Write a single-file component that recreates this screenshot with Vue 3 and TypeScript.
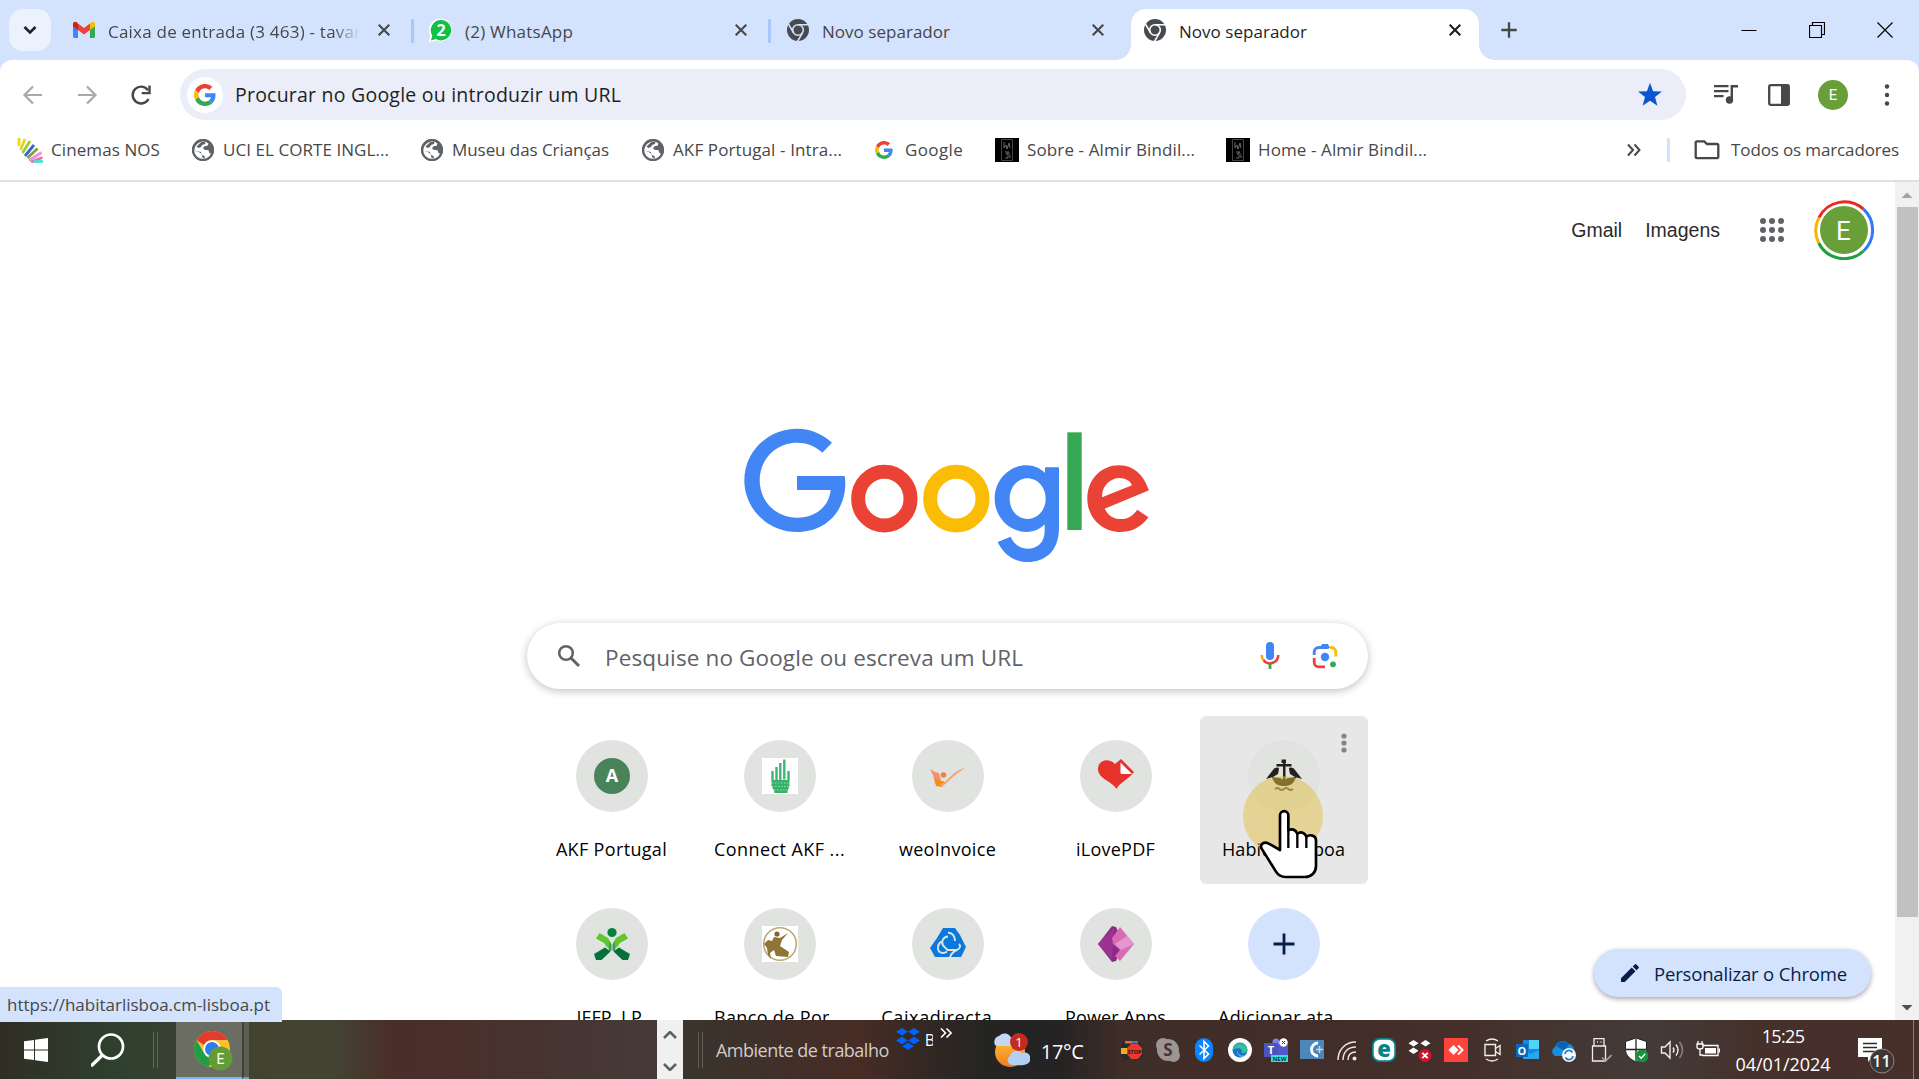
<script setup lang="ts">
interface Tab {
  icon: 'gmail' | 'whatsapp' | 'chrome'
  title: string
  width: number
  active?: boolean
}
interface Bookmark {
  icon: 'nos' | 'globe' | 'google' | 'dark'
  title: string
  width: number
}
interface Tile {
  icon: string
  title: string
  width: number
  hover?: boolean
}

const tabs: Tab[] = [
  { icon: 'gmail', title: 'Caixa de entrada (3 463) - tavare', width: 263 },
  { icon: 'whatsapp', title: '(2) WhatsApp', width: 108 },
  { icon: 'chrome', title: 'Novo separador', width: 128 },
  { icon: 'chrome', title: 'Novo separador', width: 128, active: true },
]

const bookmarks: Bookmark[] = [
  { icon: 'nos', title: 'Cinemas NOS', width: 109 },
  { icon: 'globe', title: 'UCI EL CORTE INGL...', width: 166 },
  { icon: 'globe', title: 'Museu das Crianças', width: 157 },
  { icon: 'globe', title: 'AKF Portugal - Intra...', width: 169 },
  { icon: 'google', title: 'Google', width: 58 },
  { icon: 'dark', title: 'Sobre - Almir Bindil...', width: 168 },
  { icon: 'dark', title: 'Home - Almir Bindil...', width: 169 },
]

const tiles: Tile[] = [
  { icon: 'akf', title: 'AKF Portugal', width: 111 },
  { icon: 'hand', title: 'Connect AKF ...', width: 131 },
  { icon: 'weo', title: 'weoInvoice', width: 97 },
  { icon: 'pdf', title: 'iLovePDF', width: 79 },
  { icon: 'ship', title: 'Habitar Lisboa', width: 123, hover: true },
  { icon: 'iefp', title: 'IEFP, I.P.', width: 70 },
  { icon: 'bank', title: 'Banco de Por...', width: 131 },
  { icon: 'caixa', title: 'Caixadirecta ...', width: 132 },
  { icon: 'power', title: 'Power Apps', width: 101 },
  { icon: 'add', title: 'Adicionar ata...', width: 131 },
]

const dots = [5, 12, 19]

// Spreads a label over a fixed width by adjusting its tracking.
const vFit = {
  mounted(el: HTMLElement, binding: { value: number }) {
    const count = (el.textContent ?? '').trim().length
    const natural = el.getBoundingClientRect().width
    if (count > 1) el.style.letterSpacing = `${((binding.value - natural) / (count - 0.5)).toFixed(3)}px`
  },
}
</script>

<template>
  <div class="screen">
    <div class="browser">
      <div class="tabstrip">
        <div class="tab-search">
          <svg width="14" height="10" viewBox="0 0 14 10"><path d="M1.500 2l5.500 5.500L12.500 2" fill="none" stroke="#1f1f1f" stroke-width="2.600" /></svg>
        </div>
        <div v-for="(tab, i) in tabs" :key="i" class="tab">
          <div class="tab-body" :class="{ active: tab.active }">
            <svg v-if="tab.icon === 'gmail'" class="i24" viewBox="0 0 24 24">
              <path d="M1 6v12.500A1.500 1.500 0 0 0 2.500 20H6V9z" fill="#4285f4" />
              <path d="M23 6v12.500a1.500 1.500 0 0 1-1.500 1.500H18V9z" fill="#34a853" />
              <path d="M18 5.500V12l5-3.800V6c0-2.300-2.400-2.900-3.800-1.700z" fill="#fbbc04" />
              <path d="M6 12V5.500l6 4.500 6-4.500V12l-6 4.500z" fill="#ea4335" />
              <path d="M1 6v2.200L6 12V5.500L4.800 4.300C3.400 3.100 1 3.700 1 6z" fill="#c5221f" />
            </svg>
            <svg v-else-if="tab.icon === 'whatsapp'" class="i24" viewBox="0 0 24 24">
              <path d="M12 0.500A11.500 11.500 0 1 1 7 22.700L0 24l1.300-6.800A11.500 11.500 0 0 1 12 .5z" fill="#fff" />
              <path d="M12 2A10.200 10.200 0 1 1 7 21.100L2 22.500l1.300-5A10.200 10.200 0 0 1 12 2z" fill="#12c143" />
              <text x="12" y="18" text-anchor="middle" font-size="16" font-weight="700" fill="#fff">2</text>
            </svg>
            <svg v-else class="i24" viewBox="0 0 24 24">
              <circle cx="12" cy="12" r="11" fill="#474b4f" />
              <g stroke="#fff" stroke-width="1.600" fill="none" :class="{ tinted: !tab.active }">
                <circle cx="12" cy="12" r="5.300" /><path d="M12 6.700h10.500M7.400 14.600L2.200 5.700M16.600 14.600l-5.200 9" />
              </g>
              <circle cx="12" cy="12" r="3.800" fill="#474b4f" />
            </svg>
            <div class="tab-title" :class="{ fade: i === 0 }"><span v-fit="tab.width">{{ tab.title }}</span></div>
            <svg class="i24" viewBox="0 0 24 24"><path d="M6.700 6.700l10.600 10.600M17.300 6.700L6.700 17.300" :stroke="tab.active ? '#1f1f1f' : '#474747'" stroke-width="2.100" /></svg>
          </div>
          <i v-if="i < 2" class="tab-sep"></i>
        </div>
        <svg class="new-tab" width="18" height="18" viewBox="0 0 18 18"><path d="M9 1.300v15.400M1.300 9h15.400" stroke="#474747" stroke-width="2.300" /></svg>
        <div class="window-buttons">
          <svg width="16" height="16" viewBox="0 0 16 16"><path d="M.5 8.500h15" stroke="#000" /></svg>
          <svg width="16" height="16" viewBox="0 0 16 16"><path d="M.5 3.500h12v12H.5zM3.500 3.500v-3h12v12h-3" fill="none" stroke="#000" stroke-width="1.200" /></svg>
          <svg width="16" height="16" viewBox="0 0 16 16"><path d="M.5.500l15 15M15.500.500l-15 15" stroke="#000" stroke-width="1.200" /></svg>
        </div>
      </div>

      <div class="chrome-bars">
        <div class="toolbar">
          <svg class="nav" viewBox="0 0 24 24"><path d="M21 12H4.500M12 3.500L3.500 12l8.500 8.500" fill="none" stroke="#a9a9a9" stroke-width="2.200" /></svg>
          <svg class="nav" viewBox="0 0 24 24"><path d="M3 12h16.500M12 3.500l8.500 8.500-8.500 8.500" fill="none" stroke="#a9a9a9" stroke-width="2.200" /></svg>
          <svg class="nav" viewBox="0 0 24 24"><path d="M19.500 16A8.400 8.400 0 1 1 19 7.200" fill="none" stroke="#474747" stroke-width="2.400" /><path d="M20.500 2.500v7.600h-7.800" fill="none" stroke="#474747" stroke-width="2.400" /></svg>
          <div class="omnibox">
            <div class="g-chip">
              <svg width="22" height="22" viewBox="0 0 48 48">
                <path d="M24 9.500c3.540 0 6.710 1.220 9.210 3.600l6.850-6.850C35.900 2.380 30.470 0 24 0 14.620 0 6.510 5.380 2.560 13.220l7.980 6.190C12.430 13.720 17.740 9.500 24 9.500z" fill="#ea4335" />
                <path d="M46.980 24.550c0-1.570-.15-3.090-.38-4.550H24v9.020h12.940c-.58 2.960-2.260 5.480-4.780 7.180l7.730 6c4.510-4.180 7.090-10.360 7.090-17.650z" fill="#4285f4" />
                <path d="M10.530 28.590c-.48-1.450-.76-2.990-.76-4.590s.27-3.140.76-4.590l-7.980-6.190C.92 16.460 0 20.120 0 24s.92 7.540 2.560 10.780z" fill="#fbbc05" />
                <path d="M24 48c6.480 0 11.930-2.130 15.890-5.810l-7.730-6c-2.150 1.450-4.920 2.300-8.160 2.300-6.260 0-11.570-4.220-13.470-9.910l-7.980 6.190C6.510 42.620 14.620 48 24 48z" fill="#34a853" />
              </svg>
            </div>
            <span class="omni-text" v-fit="386">Procurar no Google ou introduzir um URL</span>
            <svg class="star" width="26" height="26" viewBox="0 0 26 26"><path d="M13 .8l3.100 8.400 8.900.4-7 5.500 2.400 8.600L13 18.800l-7.400 4.900L8 15.100 1 9.600l8.900-.4z" fill="#0b57d0" /></svg>
          </div>
          <svg class="media" width="24" height="24" viewBox="0 0 24 24"><path d="M0 3.200h14.500M0 8.200h14.500M0 13.200h9.500" stroke="#474747" stroke-width="2.200" /><path d="M17.800 17V3.200H24" fill="none" stroke="#474747" stroke-width="2.400" /><circle cx="15.500" cy="17" r="3.700" fill="#474747" /></svg>
          <svg class="panel" width="22" height="22" viewBox="0 0 22 22"><rect x="1.200" y="1.200" width="19.600" height="19.600" rx="1.500" fill="none" stroke="#474747" stroke-width="2.300" /><path d="M13 1h8v20h-8z" fill="#474747" /></svg>
          <div class="mini-avatar">E</div>
          <svg class="menu" width="6" height="24" viewBox="0 0 6 24"><circle v-for="y in [3.500, 12, 20.500]" :key="y" cx="3" :cy="y" r="2.200" fill="#474747" /></svg>
        </div>

        <div class="bookmarks">
          <div v-for="(b, i) in bookmarks" :key="i" class="bookmark" :class="b.icon">
            <svg v-if="b.icon === 'nos'" width="26" height="26" viewBox="0 0 26 26" stroke-width="2.800" fill="none">
              <path d="M2 1v8" stroke="#f5d90a" /><path d="M8 2L3.500 13" stroke="#e0d820" /><path d="M13 4L5.500 16" stroke="#9ccc3c" />
              <path d="M17 8L8 19" stroke="#3c62d4" /><path d="M20.500 11.500L10.500 21" stroke="#7ba43a" />
              <path d="M24.500 15.500L12 23.500" stroke="#ef8fd8" /><path d="M25.500 20.500L14 25" stroke="#f06ab8" /><path d="M26 24.500h-9" stroke="#4be0d5" />
            </svg>
            <svg v-else-if="b.icon === 'globe'" width="24" height="24" viewBox="0 0 24 24">
              <circle cx="12" cy="12" r="11" fill="#5f6368" />
              <path d="M14.500 3.500l3 2-1 2.300-3 .5-1.500 2 1.500 1.500 4 .5 1 3 2.500.5-2.500 3.500-3.500 1.700-1-.5-.5-2.500-3-1.200-.5-2.800L3.300 12.500c-.5 4 2 7.500 6 8.500l5-.5-3-1-.5-3.500-3-2-4.500-1.500c0-5 5-10 11.200-9z" fill="#fff" />
              <path d="M14.500 3.300L10 4.200 5.500 8.500l2 1.500 2.500-1 1-2 3-1z" fill="#5f6368" />
              <circle cx="12" cy="12" r="10" fill="none" stroke="#5f6368" stroke-width="2" />
            </svg>
            <svg v-else-if="b.icon === 'google'" width="18" height="18" viewBox="0 0 48 48">
              <path d="M24 9.500c3.540 0 6.710 1.220 9.210 3.600l6.850-6.850C35.900 2.380 30.470 0 24 0 14.620 0 6.510 5.380 2.560 13.220l7.980 6.190C12.430 13.720 17.740 9.500 24 9.500z" fill="#ea4335" />
              <path d="M46.980 24.550c0-1.570-.15-3.090-.38-4.550H24v9.020h12.940c-.58 2.960-2.260 5.480-4.780 7.180l7.730 6c4.510-4.180 7.090-10.360 7.090-17.650z" fill="#4285f4" />
              <path d="M10.530 28.590c-.48-1.450-.76-2.990-.76-4.590s.27-3.140.76-4.590l-7.980-6.190C.92 16.460 0 20.120 0 24s.92 7.540 2.560 10.780z" fill="#fbbc05" />
              <path d="M24 48c6.480 0 11.930-2.130 15.890-5.810l-7.730-6c-2.150 1.450-4.920 2.300-8.160 2.300-6.260 0-11.570-4.220-13.470-9.910l-7.980 6.190C6.510 42.620 14.620 48 24 48z" fill="#34a853" />
            </svg>
            <svg v-else width="24" height="24" viewBox="0 0 24 24">
              <path d="M0 0h24v24H0z" fill="#000" /><path d="M6.500 1.500h11v21h-11z" fill="none" stroke="#444" /><path d="M9 4v6l2-3 1 4 2-6 1 5M10 14h4l-3 2h4M10 20h3v-3M15 20v-3" fill="none" stroke="#6a6a6a" />
            </svg>
            <span v-fit="b.width" class="bm-text">{{ b.title }}</span>
          </div>
          <svg class="more" width="14" height="14" viewBox="0 0 14 14"><path d="M1 1.500L6 7l-5 5.500M7.500 1.500l5 5.500-5 5.500" fill="none" stroke="#474747" stroke-width="2" /></svg>
          <i class="bm-sep"></i>
          <svg class="folder" width="26" height="20" viewBox="0 0 26 20"><path d="M1.700 3V17a1.200 1.200 0 0 0 1.200 1.200h20.200a1.200 1.200 0 0 0 1.200-1.200V5.200A1.200 1.200 0 0 0 23.100 4H13L10.200 1.400H2.900A1.200 1.200 0 0 0 1.700 3z" fill="none" stroke="#474747" stroke-width="2.300" /></svg>
          <span v-fit="168" class="bm-text">Todos os marcadores</span>
        </div>
      </div>

      <div class="page">
        <div class="content">
          <div class="top-links">
            <span>Gmail</span><span class="images">Imagens</span>
            <svg class="apps" width="24" height="24" viewBox="0 0 24 24" fill="#5f6368">
              <template v-for="y in [3, 12, 21]" :key="y"><circle v-for="x in [3, 12, 21]" :key="x" :cx="x" :cy="y" r="3" /></template>
            </svg>
            <svg class="account" width="60" height="60" viewBox="0 0 60 60" fill="none" stroke-width="3">
              <path d="M5 17.500A28.500 28.500 0 0 1 49.500 9.200" stroke="#ea2a1d" />
              <path d="M49.500 9.200A28.500 28.500 0 0 1 49.500 51" stroke="#3579f6" />
              <path d="M49.500 51A28.500 28.500 0 0 1 4.700 43" stroke="#1fa040" />
              <path d="M4.700 43A28.500 28.500 0 0 1 5 17.500" stroke="#fbb400" />
              <circle cx="30" cy="30" r="24" fill="#689f38" />
              <text x="29.500" y="39.500" text-anchor="middle" font-size="26" fill="#fff" class="roboto">E</text>
            </svg>
          </div>

          <svg class="logo" width="406" height="136" viewBox="72 54 1218 408" role="img" aria-label="Google">
            <path d="M231 198H374C375 204 376 211 376 219C376 305 317 366 231 366C144 366 73 297 73 211C73 125 144 56 231 56C275 56 308 73 336 98L307 128C290 112 266 98 231 98C168 98 119 148 119 211C119 274 168 323 231 323C294 323 328 283 332 240H231Z" fill="#4285f4" />
            <ellipse cx="493" cy="266" rx="78.500" ry="80.500" fill="none" stroke="#ea4335" stroke-width="42" />
            <ellipse cx="709" cy="266" rx="78.500" ry="80.500" fill="none" stroke="#fbbc05" stroke-width="42" />
            <path fill-rule="evenodd" d="M975 172H1017V353C1017 425 974 456 922 456C874 456 846 424 833 396L872 380C879 397 896 416 922 416C954 416 974 396 974 362V343C962 356 943 366 919 366C869 366 824 322 824 266C824 209 869 166 919 166C943 166 962 176 975 189ZM922 205C893 205 869 231 869 266C869 301 893 327 922 327C952 327 977 301 977 266C977 231 952 205 922 205Z" fill="#4285f4" />
            <rect x="1042" y="67" width="43" height="293" fill="#34a853" />
            <path fill-rule="evenodd" d="M1252 299L1285 322C1274 338 1248 366 1202 366C1145 366 1102 322 1102 266C1102 206 1146 166 1197 166C1249 166 1274 207 1282 230L1287 241L1154 296C1164 316 1180 327 1202 327C1225 327 1240 316 1252 299ZM1146 262L1236 226C1231 213 1216 204 1198 204C1175 204 1145 224 1146 262Z" fill="#ea4335" />
          </svg>

          <div class="search">
            <svg width="24" height="24" viewBox="0 0 24 24"><circle cx="9" cy="9" r="6.800" fill="none" stroke="#5f6368" stroke-width="2.500" /><path d="M14 14l8 8" stroke="#5f6368" stroke-width="3" /></svg>
            <span v-fit="418" class="search-text">Pesquise no Google ou escreva um URL</span>
            <svg class="mic" width="20" height="28" viewBox="0 0 20 28" fill="none">
              <rect x="6" y="0" width="8" height="18" rx="4" fill="#4285f4" />
              <path d="M1.700 13a8.300 8.300 0 0 0 2.600 6" stroke="#f9ab00" stroke-width="2.500" /><path d="M3.700 18.400A8.300 8.300 0 0 0 18.300 13" stroke="#ea4335" stroke-width="2.500" /><path d="M10 21.500V27" stroke="#34a853" stroke-width="2.800" />
            </svg>
            <svg width="26" height="26" viewBox="0 0 26 26" fill="none">
              <path d="M2.200 12V9a4.500 4.500 0 0 1 4.500-4.500h10" stroke="#4285f4" stroke-width="2.800" /><path d="M8 5l2-4h6l2 4z" fill="#4285f4" />
              <path d="M18 4.500h1.500A4.500 4.500 0 0 1 23.800 9v4.500" stroke="#fbbc04" stroke-width="2.800" /><path d="M2.200 15v4.500a4.500 4.500 0 0 0 4.500 4.300H13" stroke="#ea4335" stroke-width="2.800" />
              <circle cx="13" cy="14" r="4.200" fill="#4285f4" /><circle cx="21" cy="21.300" r="2.900" fill="#34a853" />
            </svg>
          </div>

          <div class="tiles">
            <div v-for="t in tiles" :key="t.title" class="tile" :class="{ hover: t.hover }">
              <div class="disc" :class="{ blue: t.icon === 'add' }">
                <svg width="36" height="36" viewBox="0 0 36 36">
                  <g v-if="t.icon === 'akf'"><circle cx="18" cy="18" r="18" fill="#49835a" /><text x="18" y="24" text-anchor="middle" font-size="18" font-weight="700" fill="#fff">A</text></g>
                  <g v-else-if="t.icon === 'hand'">
                    <path d="M0 0h36v36H0z" fill="#fff" /><path d="M10.500 13v9M14.500 9v13M18.300 5v17M22.300 1.500v20M26.500 13v9" stroke="#3fb673" stroke-width="2.400" />
                    <path d="M9.500 22h18v5c0 3-2 4-2 8h-13c0-4-3-5-3-8z" fill="#35b16a" /><path d="M10 25h17M10 28.500h17M12 32h13" stroke="#9bdcb6" stroke-dasharray="1.500 1.500" />
                  </g>
                  <g v-else-if="t.icon === 'weo'">
                    <path d="M0 11q4 3 9 4l2 7-2 6-4-2-2-9z" fill="#f4946a" /><path d="M5 20l4 2 6 2-3 5-6-1z" fill="#f98a12" />
                    <circle cx="13.500" cy="17" r="2.800" fill="#f58233" /><path d="M10 26q5-1 8-5 7-8 17.500-11.500-9 6-15.500 12-4 5-9 7z" fill="#f5a070" />
                  </g>
                  <g v-else-if="t.icon === 'pdf'"><path d="M18.500 31C14 23 0 21 0 11 0 1.500 11-.5 17 6l6-5 13 13C30 22 22 24 18.500 31z" fill="#e5322d" /><path d="M22.500 4.500v10.500a1 1 0 0 0 1 1H34z" fill="#fff" /></g>
                  <g v-else-if="t.icon === 'ship'" fill="#24201a">
                    <path d="M15.500 1.500h4.500v3.500h-4.500z" /><path d="M10.500 6h15v2.500h-15zM17 4h2.500v20H17z" />
                    <path d="M0 21l7-9c2-3 6-3 6-1l-1 5-5 3zM36 21l-7-9c-2-3-6-3-6-1l1 5 5 3zM6 19l8 1 4 2 4-2 8-1c-2 7-6 9-12 9S8 26 6 19z" />
                    <path d="M9 31q2.500-2 4.500 0t4.500 0 4.500 0 4.500 0" fill="none" stroke="#5d553d" stroke-width="2" />
                  </g>
                  <g v-else-if="t.icon === 'iefp'">
                    <circle cx="18" cy="6.500" r="4.600" fill="#07823c" />
                    <path d="M5.500 7L14 12l3 5v7l-4-3-3-4-8-4.500zM30.500 7L22 12l-3 5v7l4-3 3-4 8-4.500z" fill="#5ec72e" />
                    <path d="M15.500 15.500l2 3v6l-3 1zM20.500 15.500l-2 3v6l3 1z" fill="#3b9b4d" />
                    <path d="M11 21.500l5.500 4-9 8.500H2L0 28zM25 21.500l-5.500 4 9 8.500H34l2-6z" fill="#06713a" />
                  </g>
                  <g v-else-if="t.icon === 'bank'">
                    <path d="M0 0h36v36H0z" fill="#fff" /><circle cx="18" cy="18" r="16.300" fill="none" stroke="#bda978" stroke-width="1.600" />
                    <circle cx="15" cy="8" r="2.600" fill="#806729" /><path d="M12 11l6 1 8-5-6 7-2 6 9 6-1 5-12-1-2-6-4 3 1 6-3-4-1-7-3-4 4-4 4 1z" fill="#8d7535" />
                  </g>
                  <g v-else-if="t.icon === 'caixa'">
                    <path d="M13 2h12l5 7 6 12-5 10H5L0 22l7-10z" fill="#0b79d9" />
                    <path d="M18 10.500a6 6 0 0 0-5 9l4.500 4.500h9M18 6.500q7 1 7 8.500M11 15.500q-5 5-2 10 4 3 8 0M29 18q3 3-2 6-5 2-7 7" fill="none" stroke="#e1e3e1" stroke-width="1.900" />
                  </g>
                  <g v-else-if="t.icon === 'power'">
                    <path d="M14 0l4 1 8 17-8 17-4 1L0 18z" fill="#8b2a87" /><path d="M16 2l-2 32L0 18z" fill="#9c3391" />
                    <path d="M22 1l14 17-14 17-5-5 5-6-7-6-1-6z" fill="#d76bb5" /><path d="M29 10l7 8-13 6-6-6z" fill="#e696cb" />
                  </g>
                  <path v-else d="M18 7.500v21M7.500 18h21" stroke="#041e49" stroke-width="2.800" />
                </svg>
              </div>
              <div class="tile-label"><span v-fit="t.width">{{ t.title }}</span></div>
              <svg v-if="t.hover" class="tile-menu" width="6" height="24" viewBox="0 0 6 24"><circle v-for="y in dots" :key="y" cx="3" :cy="y" r="2.600" fill="#80868b" /></svg>
            </div>
          </div>

          <div class="customize">
            <svg width="20" height="20" viewBox="0 0 20 20" fill="#041e49"><path d="M1 15.200V19h3.800L15.500 8.300l-3.800-3.800zM12.700 3.500l3.800 3.800 2.100-2.100c.5-.5.5-1 0-1.500l-2.300-2.300c-.5-.5-1-.5-1.500 0z" /></svg>
            <span v-fit="193">Personalizar o Chrome</span>
          </div>
        </div>
        <div class="scrollbar">
          <svg width="24" height="25" viewBox="0 0 24 25"><path d="M6.500 16L12 10.500 17.500 16z" fill="#a3a3a3" /></svg>
          <div class="thumb"></div>
          <svg width="24" height="25" viewBox="0 0 24 25"><path d="M6.500 10L12 15.500 17.500 10z" fill="#505050" /></svg>
        </div>
      </div>
      <div class="status"><span v-fit="263">https://habitarlisboa.cm-lisboa.pt</span></div>
      <div class="spot"></div>
      <svg class="cursor" width="60" height="72" viewBox="117 264 180 216">
        <path d="M180 390V286a12 12 0 0 1 25 0V331C215 325 227 328 232 341C243 333 255 338 259 350C270 342 288 346 288 361V438C288 458 274 471 254 471H197C183 471 174 465 168 455L125 386C118 374 132 363 145 370L180 390Z" fill="#fff" stroke="#000" stroke-width="8" stroke-linejoin="round" />
        <path d="M205 331v53M232 341v43M259 350v34" stroke="#000" stroke-width="7" />
      </svg>
    </div>

    <div class="taskbar">
      <svg class="win" width="24" height="24" viewBox="0 0 24 24" fill="#fff"><path d="M0 3.300l10-1.400v9.600H0zM11 1.700L24 0v11.500H11zM0 12.500h10v9.600L0 20.700zM11 12.500h13V24l-13-1.700z" /></svg>
      <svg class="find" width="34" height="34" viewBox="0 0 34 34" fill="none" stroke="#fff"><circle cx="20" cy="13.500" r="12" stroke-width="2.700" /><path d="M11 22.500L1.200 32" stroke-width="3.300" stroke-linecap="round" /></svg>
      <i class="grip g1"></i>
      <div class="app">
        <svg width="42" height="42" viewBox="0 0 42 42">
          <circle cx="19" cy="19" r="18" fill="#fbc02d" />
          <path d="M3.400 10A18 18 0 0 1 34.600 10H19a9 9 0 0 0-8 5z" fill="#e33b2e" /><path d="M3.400 10l8.100 14a9 9 0 0 0 8 4L16 36.800A18 18 0 0 1 3.400 10z" fill="#209d4b" />
          <circle cx="19" cy="19" r="8.800" fill="#fff" /><circle cx="19" cy="19" r="7" fill="#2d7cf0" />
          <circle cx="27.500" cy="28.500" r="12" fill="#639c35" /><text x="27.500" y="33.500" text-anchor="middle" font-size="14" fill="#fff" class="roboto">E</text>
        </svg>
      </div>
      <div class="app-stack"></div>
      <div class="scroller">
        <svg width="14" height="8" viewBox="0 0 14 8"><path d="M1 7l6-6 6 6" fill="none" stroke="#606060" stroke-width="2.600" /></svg>
        <svg width="14" height="8" viewBox="0 0 14 8"><path d="M1 1l6 6 6-6" fill="none" stroke="#606060" stroke-width="2.600" /></svg>
      </div>
      <i class="grip g2"></i>
      <span v-fit="173" class="desk">Ambiente de trabalho</span>
      <svg class="dropbox" width="24" height="22" viewBox="0 0 24 22" fill="#0061ff"><path d="M6 0l6 3.800-6 3.800L0 3.800zM18 0l6 3.800-6 3.800-6-3.800zM6 8.700l6 3.800-6 3.800-6-3.800zM18 8.700l6 3.800-6 3.800-6-3.800zM12 14.500l6 3.700-6 3.800-6-3.800z" /></svg>
      <span class="clipped">B</span>
      <svg class="chev" width="12" height="10" viewBox="0 0 12 10"><path d="M1 .5L5.500 5 1 9.500M6.500.500L11 5 6.500 9.500" fill="none" stroke="#fff" stroke-width="1.600" /></svg>
      <svg class="weather" width="38" height="36" viewBox="0 0 38 36">
        <defs><linearGradient id="sun" x1="0" y1="0" x2="0" y2="1"><stop offset="0" stop-color="#fcc43a" /><stop offset="1" stop-color="#f07d1e" /></linearGradient></defs>
        <circle cx="18" cy="20" r="15" fill="url(#sun)" /><path d="M4 14a6 6 0 0 1 3-10 7 7 0 0 1 12 2v8z" fill="#c4d8f5" />
        <path d="M19 33a5 5 0 0 1-1-9 7 7 0 0 1 12-3 6 6 0 0 1 5 11c-3 2-12 1-16 1z" fill="#b4cff4" />
        <circle cx="27" cy="10" r="9" fill="#c42b1c" /><text x="27" y="14.500" text-anchor="middle" font-size="13" fill="#fff">1</text>
      </svg>
      <span v-fit="43" class="temp">17°C</span>

      <div class="tray">
        <svg viewBox="0 0 24 24"><path d="M3 4h17l3 8v7h-3v3h-4v-2H8v2H3v-3H1v-8z" fill="#28292b" /><path d="M5 3h7v2.500H5z" fill="#dc7137" /><path d="M12 3h6v2.500h-6z" fill="#4977c7" /><path d="M1 10h6v6H1z" fill="#e8ad25" /><path d="M11 6h7l4 4v6l-4 5h-7l-4-5v-6z" fill="#e83b2d" /><text x="14.500" y="15.500" text-anchor="middle" font-size="5.500" font-weight="700" fill="#28110e">STOP</text></svg>
        <svg viewBox="0 0 24 24"><circle cx="12" cy="12" r="11" fill="#9c9593" /><circle cx="7" cy="7" r="7" fill="#9c9593" /><circle cx="17.500" cy="17.500" r="6.500" fill="#9c9593" /><text x="12" y="18" text-anchor="middle" font-size="17" font-weight="700" fill="#443532">S</text></svg>
        <svg viewBox="0 0 24 24"><rect x="3" width="18" height="24" rx="9" fill="#0a84ff" /><path d="M7.500 7.500l9 8.500-4.500 4.500v-17L16.500 8l-9 8.500" fill="none" stroke="#fff" stroke-width="1.600" /></svg>
        <svg viewBox="0 0 24 24"><circle cx="12" cy="12" r="12" fill="#fff" /><circle cx="12" cy="12" r="7.500" fill="#1677c8" /><path d="M4.600 12A7.500 7.500 0 0 1 19.500 12c0 3-4 3.300-6 2.500 2-4-3-6-8.900-2.500z" fill="#35bfa0" /><path d="M10 13c-1 4 4 6 8 4l-2 1.500C11 19.500 8 15 10 13z" fill="#fff" opacity=".6" /></svg>
        <svg viewBox="0 0 24 24"><path d="M10 4h14v14H10z" fill="#5059c9" /><circle cx="12" cy="4" r="3.500" fill="#7b83eb" /><path d="M0 5h14v14H0z" fill="#4b53bc" /><text x="7" y="16" text-anchor="middle" font-size="11" font-weight="700" fill="#fff">T</text><circle cx="19.500" cy="4.500" r="4.200" fill="#fff" /><path d="M18 3l3 3m0-3l-3 3" stroke="#333" /><path d="M7 17h17v7H7z" fill="#2fe3dc" /><text x="15.500" y="22.800" text-anchor="middle" font-size="6" font-weight="700" fill="#073642">NEW</text></svg>
        <svg viewBox="0 0 24 24"><path d="M0 2h24v19H0z" fill="#4c86bb" /><path d="M18 5a6.500 6.500 0 1 0 0 13" fill="none" stroke="#fff" stroke-width="2.800" /><path d="M16 11.500h7M19.500 8v7" stroke="#c3d9ec" stroke-width="1.500" /></svg>
        <svg viewBox="0 0 24 24" fill="none" stroke="#e8e4e2" stroke-width="1.500"><path d="M2 22C2 12 9 4 20 4M7 22c0-8 5-13 13-13M12 22c0-5 3-8 8-8" /><circle cx="18.500" cy="20.500" r="1.300" fill="#fff" /></svg>
        <svg viewBox="0 0 24 24"><rect x=".8" y=".8" width="22.400" height="22.400" rx="7" fill="#fff" stroke="#078489" stroke-width="1.800" /><text x="12" y="18.500" text-anchor="middle" font-size="22" font-weight="800" fill="#078489">e</text></svg>
        <svg viewBox="0 0 24 24"><path d="M5.500 2l5 3.300-5 3.300-5-3.300zM17.500 2l5 3.300-5 3.300-5-3.300zM5.500 9.500l5 3.300-5 3.300-5-3.300z" fill="#fff" /><circle cx="17" cy="17.500" r="6.500" fill="#d5102f" /><path d="M14.300 14.800l5.400 5.400m0-5.400l-5.400 5.400" stroke="#fff" stroke-width="1.900" /></svg>
        <svg viewBox="0 0 24 24"><path d="M0 0h24v24H0z" fill="#ff443b" /><path d="M9.500 7l5 5-5 5-5-5z" fill="#fff" /><path d="M14 7.500l4.500 4.500-4.500 4.500" fill="none" stroke="#fff" stroke-width="2" /></svg>
        <svg viewBox="0 0 24 24" fill="none" stroke="#f2efed" stroke-width="1.400"><path d="M5 6.500h10.500v11H5zM15.500 10.500L20 7.500v9l-4.500-3M6 3q6-4 12 0M6 21q6 4 12 0" /></svg>
        <svg viewBox="0 0 24 24"><path d="M7 2h16v18H7z" fill="#1488dc" /><path d="M13 2h10v9H13z" fill="#4fd3f9" /><path d="M7 12l8 4 8-4v9H7z" fill="#28a8ea" /><path d="M0 6h12v13H0z" fill="#0869bd" /><text x="6" y="16.500" text-anchor="middle" font-size="11" font-weight="700" fill="#fff">O</text></svg>
        <svg viewBox="0 0 24 24"><path d="M3 18a5 5 0 0 1 0-9 8 8 0 0 1 14-3c5 1 6 6 5 12z" fill="#1490df" /><path d="M4 8a8 8 0 0 1 13-2l-4 7z" fill="#0864b8" /><circle cx="17" cy="17" r="7" fill="#f2f7fc" /><path d="M13 16a4 4 0 0 1 7.500-1.500M21 18a4 4 0 0 1-7.500 1.500" fill="none" stroke="#1b79c8" stroke-width="1.600" /></svg>
        <svg viewBox="0 0 24 24" fill="none" stroke="#eee" stroke-width="1.300"><path d="M6 8V.7h10V8M4.500 8h13v15h-13zM9 4h1M12.500 4h1" /><path d="M14 19.500l3.500 3.500 6-6" stroke="#aaa29f" stroke-width="1.600" /></svg>
        <svg viewBox="0 0 24 24"><path d="M12 0l10.500 3.500v8c0 6-5 10-10.500 12.500C6.500 21.500 1.500 17.500 1.500 11.500v-8z" fill="#fff" stroke="#222" /><path d="M12 1v22M2 11.500h20" stroke="#222" stroke-width="1.300" /><circle cx="18" cy="18" r="6.500" fill="#14923e" /><path d="M15 18l2.200 2.200 4-4.400" fill="none" stroke="#fff" stroke-width="1.500" /></svg>
        <svg viewBox="0 0 24 24" fill="none" stroke="#f2efed" stroke-width="1.400"><path d="M1.500 9h3.500l5-5v16l-5-5H1.500zM13 9.500q2 2.500 0 5M16 6.500q4 5.500 0 11" /><path d="M19.500 4q6 8 0 16" stroke="#8f8582" /></svg>
        <svg viewBox="0 0 24 24"><path d="M6.500 7.500h15.500v10H6.500" fill="none" stroke="#fff" stroke-width="1.300" /><path d="M9 10h11v5.500H9zM22.500 10.500H24v4h-1.500z" fill="#fff" /><path d="M1 6h6v3q0 2-3 2t-3-2zM2 3v3M6 3v3M4 11v6h3" fill="none" stroke="#fff" stroke-width="1.300" /></svg>
      </div>
      <div class="clock"><span v-fit="43">15:25</span><span v-fit="95">04/01/2024</span></div>
      <svg class="notes" width="38" height="38" viewBox="0 0 38 38"><path d="M0 0h24v19H14l-4 5v-5H0z" fill="#fff" /><path d="M5 5.500h14M5 9.500h14M5 13.500h14" stroke="#332825" stroke-width="1.300" /><circle cx="24" cy="23" r="12" fill="#3d3735" stroke="#8c8583" /><text x="23.500" y="29" text-anchor="middle" font-size="16" font-weight="600" fill="#fff">11</text></svg>
      <i class="peek"></i>
    </div>
  </div>
</template>

<style>
body { margin: 0; overflow: hidden; }
</style>

<style scoped>
.screen { height: 1079px; width: 1919px; display: flex; flex-direction: column; position: relative; overflow: hidden; font-family: "Open Sans", "Noto Sans", sans-serif; font-size: 17px; color: #474747; }
.screen * { box-sizing: border-box; }
.screen svg { flex: none; display: block; }
.screen span { white-space: nowrap; }
.roboto { font-family: Roboto, sans-serif; }
.browser { height: 1020px; flex: none; display: flex; flex-direction: column; background: #d3e3fd; }
.tabstrip { height: 60px; flex: none; display: flex; align-items: flex-start; padding: 9px 26px 0 9px; }
.tab-search { width: 42px; height: 42px; margin-right: 6px; border-radius: 14px; background: #ebf1fd; display: flex; align-items: center; justify-content: center; flex: none; }
.tab { width: 357px; height: 51px; flex: none; padding-left: 3px; display: flex; }
.tab-body { width: 348px; height: 51px; padding: 0 12px 9px; display: flex; align-items: center; gap: 12px; position: relative; }
.tab-body.active { background: #fff; border-radius: 15px 15px 0 0; color: #1f1f1f; }
.tab-body.active::before, .tab-body.active::after { content: ""; position: absolute; bottom: 0; width: 15px; height: 15px; }
.tab-body.active::before { left: -15px; background: radial-gradient(circle at 0 0, #d3e3fd 14.500px, #fff 15px); }
.tab-body.active::after { right: -15px; background: radial-gradient(circle at 100% 0, #d3e3fd 14.500px, #fff 15px); }
.tab-sep { width: 3px; height: 24px; margin: 10px 0 0 3px; background: #a8c7fa; border-radius: 1px; }
.tab-title { width: 252px; overflow: hidden; line-height: 28px; padding-top: 3px; }
.tab-title.fade { mask-image: linear-gradient(90deg, #000 225px, transparent 252px); }
.i24 { width: 24px; height: 24px; }
.tinted { stroke: #d3e3fd; }
.new-tab { margin: 12px 0 0 15px; }
.window-buttons { margin-left: auto; margin-top: 13px; display: flex; gap: 52px; }
.chrome-bars { height: 122px; flex: none; background: #fff; border-radius: 12px 12px 0 0; border-bottom: 2px solid #e0e0e0; }
.toolbar { height: 69px; display: flex; align-items: center; padding-left: 21px; }
.nav { width: 24px; height: 24px; margin-right: 30px; }
.omnibox { width: 1506px; height: 51px; margin-left: -3px; border-radius: 26px; background: #ebeef8; display: flex; align-items: center; padding: 0 23px 0 7px; }
.g-chip { width: 36px; height: 36px; border-radius: 50%; background: #fff; display: flex; align-items: center; justify-content: center; }
.omni-text { margin-left: 12px; font-size: 19.500px; color: #1f1f1f; }
.star { margin-left: auto; }
.media { margin-left: 28px; }
.panel { margin-left: 30px; }
.mini-avatar { width: 30px; height: 30px; margin-left: 28px; border-radius: 50%; background: #689f38; color: #fff; font: 15px/30px Roboto, sans-serif; text-align: center; }
.menu { margin-left: 36px; }
.bookmarks { height: 42px; display: flex; align-items: center; padding: 0 20px 0 17px; }
.bm-text { margin-top: -2px; }
.bookmark { display: flex; align-items: center; }
.bookmark .bm-text { margin-left: 8px; }
.bookmark.nos { width: 174px; }
.bookmark.globe { width: 229px; }
.bookmark.globe + .bookmark.globe { width: 221px; }
.bookmark.globe + .bookmark.globe + .bookmark.globe { width: 234px; }
.bookmark.google { width: 120px; }
.bookmark.google .bm-text { margin-left: 12px; }
.bookmark.dark { width: 231px; }
.more { margin-left: auto; }
.bm-sep { width: 3px; height: 24px; margin: 0 24px 0 26px; background: #d3e3fd; border-radius: 1px; }
.folder { margin-right: 11px; }
.page { height: 838px; display: flex; background: #fff; }
.content { width: 1895px; display: flex; flex-direction: column; align-items: center; position: relative; overflow: hidden; }
.top-links { align-self: flex-end; height: 60px; margin: 18px 21px 0 0; display: flex; align-items: center; font-family: "Liberation Sans", Arial, sans-serif; font-size: 19.500px; color: #2b2b2b; }
.images { margin-left: 23px; }
.apps { margin-left: 40px; }
.account { margin-left: 30px; }
.logo { margin-top: 168px; margin-left: -1px; }
.search { width: 841px; height: 66px; margin-top: 59px; border-radius: 33px; box-shadow: 0 2px 8px rgba(0, 0, 0, .25); display: flex; align-items: center; padding: 0 30px; flex: none; background: #fff; }
.search-text { margin-left: 24px; font-size: 22.500px; color: #5f6368; padding-top: 2px; }
.mic { margin-left: auto; margin-right: 32px; }
.tiles { width: 840px; margin-top: 27px; display: flex; flex-wrap: wrap; flex: none; }
.tile { width: 168px; height: 168px; border-radius: 6px; display: flex; flex-direction: column; align-items: center; padding-top: 24px; position: relative; }
.tile.hover { background: #e7e7e7; }
.disc { width: 72px; height: 72px; flex: none; border-radius: 50%; background: #e1e3e1; display: flex; align-items: center; justify-content: center; }
.disc.blue { background: #d3e3fd; }
.tile-label { height: 25px; margin-top: 24px; line-height: 27px; font-size: 18px; color: #000; overflow: hidden; }
.tile-menu { position: absolute; right: 21px; top: 15px; }
.customize { position: absolute; left: 1594px; top: 767px; width: 277px; height: 48px; border-radius: 24px; background: #d3e3fd; box-shadow: 0 2px 5px rgba(0, 0, 0, .35); display: flex; align-items: center; padding-left: 26px; gap: 14px; font-size: 18.500px; color: #041e49; }
.scrollbar { width: 24px; background: #f1f1f1; display: flex; flex-direction: column; align-items: center; }
.thumb { width: 21px; height: 710px; background: #c1c1c1; margin-bottom: auto; }
.status { position: absolute; left: 0; top: 987px; width: 282px; height: 35px; z-index: 2; padding-left: 7px; background: #d3e3fd; border-radius: 0 6px 0 0; line-height: 35px; }
.spot { position: absolute; left: 1243px; top: 776px; width: 80px; height: 80px; border-radius: 50%; background: rgba(226, 191, 66, .5); }
.cursor { position: absolute; left: 1259px; top: 808px; }
.taskbar { height: 59px; flex: none; display: flex; align-items: center; overflow: hidden; background: linear-gradient(90deg, #302e24 0, #2f3a2b 75px, #30402e 120px, #3b4032 190px, #42432f 260px, #434334 335px, #492f29 390px, #4b2e29 440px, #47332f 520px, #463a38 650px, #39342c 690px, #403029 780px, #482c26 860px, #342823 920px, #242423 990px, #252323 1060px, #3f2d28 1120px, #442f2a 1450px, #443b38 1650px, #45302a 1760px, #482f2a 1919px); }
.win { margin-left: 24px; }
.find { margin-left: 43px; }
.grip { width: 5px; height: 36px; flex: none; border: solid rgba(255, 255, 255, .2); border-width: 0 1px; }
.g1 { margin-left: 28px; }
.g2 { margin-left: 15px; }
.app { width: 66px; height: 59px; margin-left: 18px; flex: none; background: #6b6d62; border-bottom: 2px solid #76b9ed; display: flex; align-items: center; padding: 4px 0 0 17px; }
.app-stack { width: 7px; height: 59px; flex: none; background: #5c5e53; border-left: 2px solid #3f4238; border-bottom: 2px solid #6aa4d0; }
.scroller { width: 26px; height: 59px; margin-left: 408px; flex: none; background: #f0f0f0; display: flex; flex-direction: column; justify-content: space-between; align-items: center; padding: 11px 0 8px; }
.desk { margin-left: 13px; color: #d0cbc8; font-size: 18px; }
.dropbox { margin: -22px 0 0 7px; }
.clipped { margin: -20px 0 0 5px; width: 8px; overflow: hidden; color: #fff; font-size: 16px; }
.chev { margin: -33px 0 0 7px; }
.weather { margin-left: 40px; }
.temp { margin-left: 11px; color: #fff; font-size: 20px; padding-top: 4px; }
.tray { display: flex; width: 612px; height: 24px; margin-left: auto; flex: none; }
.tray svg { width: 24px; height: 24px; margin: 0 6px; }
.clock { width: 114px; flex: none; display: flex; flex-direction: column; align-items: center; line-height: 28px; font-size: 18px; color: #fff; padding-top: 1px; }
.notes { margin: 14px 0 0 18px; }
.peek { width: 1px; height: 59px; margin: 0 5px 0 17px; background: #8b7c77; flex: none; }
</style>
